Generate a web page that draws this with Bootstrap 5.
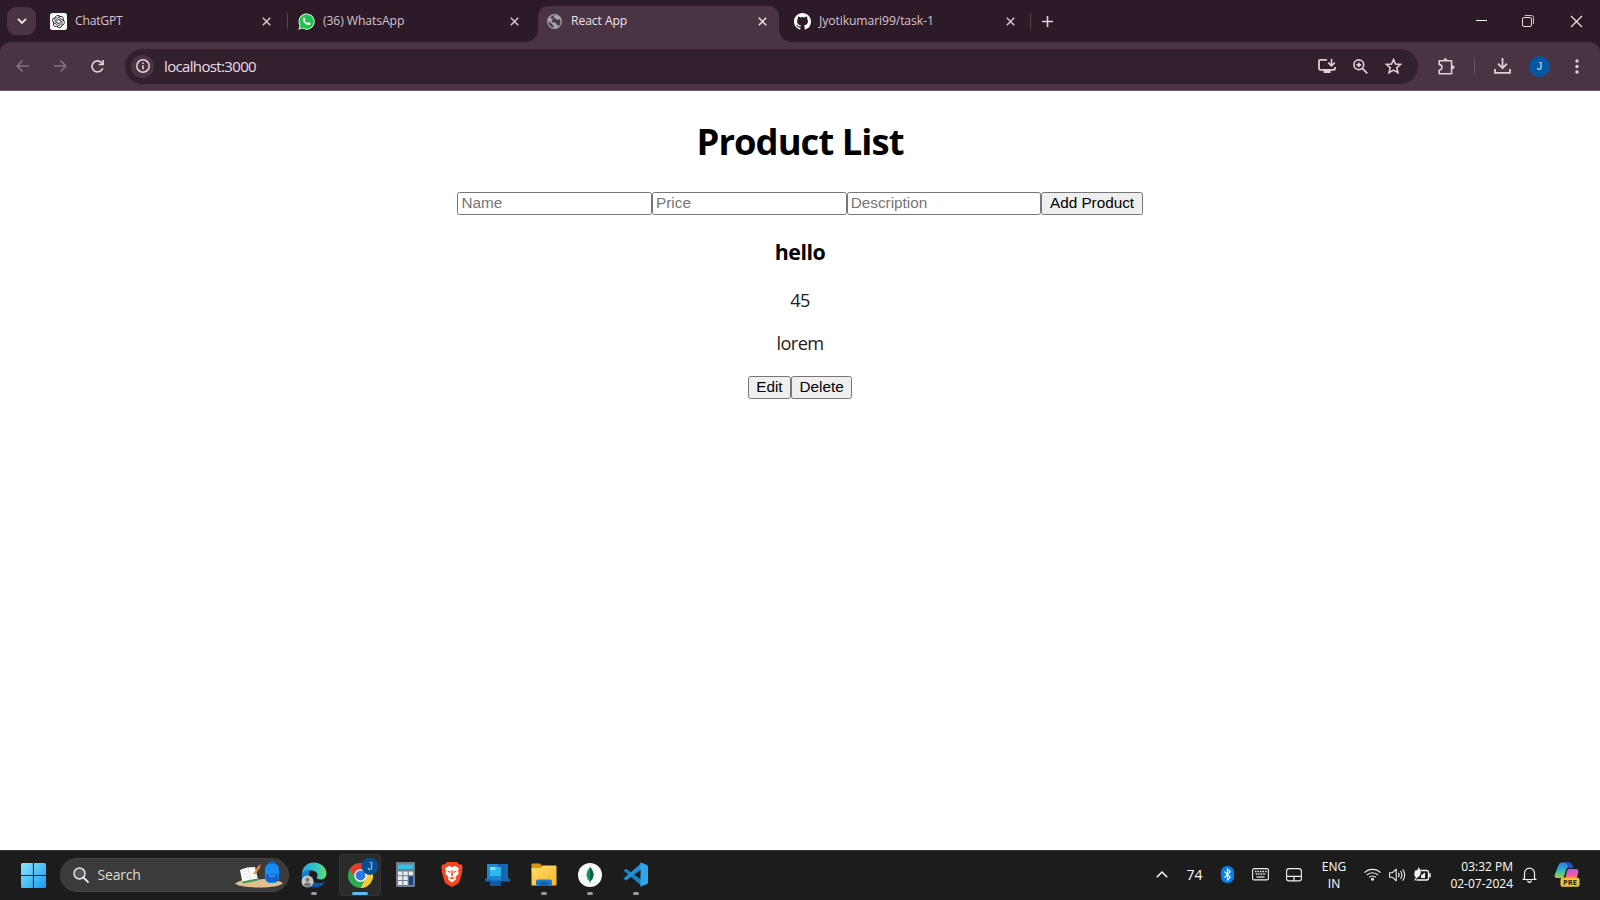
<!DOCTYPE html>
<html lang="en">
<head>
<meta charset="utf-8">
<meta name="viewport" content="width=device-width, initial-scale=1">
<title>React App</title>
<link href="https://cdn.jsdelivr.net/npm/bootstrap@5.3.0/dist/css/bootstrap.min.css" rel="stylesheet">
<style>
  body { font-family: "Open Sans", "Noto Sans", sans-serif; height: 900px; overflow: hidden; color: #111; }
  svg { display: block; flex: none; overflow: visible; }
  .slot { flex: none; display: flex; justify-content: center; align-items: center; }

  /* tab strip */
  .strip { height: 42px; background: #2c1a28; }
  .strip-pad { width: 7px; }
  .tab-search { width: 29px; height: 28px; border-radius: 9px; background: #4a3444; margin: -1px 14px 0 0; }
  .tab-item { height: 42px; font-size: 12.2px; letter-spacing: -.1px; color: #d6c3d0; }
  .tab-item .tab-name { margin-left: 8px; line-height: 42px; }
  .tab-1 { width: 237px; padding-right: 16px; }
  .tab-1 .tab-name { letter-spacing: -.25px; }
  .tab-2 { width: 240px; margin-left: 10px; padding-right: 19px; }
  .tab-3 { width: 241px; height: 36px; padding: 0 12px 6px 9px; background: #4a3444; border-radius: 10px 10px 0 0; color: #efe0eb; position: relative; margin-top: 6px; }
  .tab-3::before, .tab-3::after { content: ""; position: absolute; bottom: 0; width: 12px; height: 12px; }
  .tab-3::before { left: -12px; background: radial-gradient(circle at 0 0, transparent 11.5px, #4a3444 12px); }
  .tab-3::after { right: -12px; background: radial-gradient(circle at 100% 0, transparent 11.5px, #4a3444 12px); }
  .tab-3 .tab-name { line-height: 30px; margin-left: 9px; }
  .tab-4 { width: 236px; margin-left: 15px; padding-right: 15px; }
  .split { width: 1px; height: 16px; background: #57424f; }
  .new-tab { width: 33px; }
  .win-btn { width: 47px; }
  .win-min { padding-right: 2px; }
  .win-max { padding-right: 3px; }

  /* toolbar */
  .toolbar-back { background: #2c1a28; }
  .toolbar { height: 49px; background: #4a3444; border-radius: 10px 10px 0 0; border-bottom: 1px solid #6b5a66; }
  .nav-back { width: 45px; }
  .nav-fwd { width: 30px; }
  .nav-load { width: 50px; padding-right: 5px; }
  .omnibox { flex: none; width: 1293px; height: 35px; border-radius: 18px; background: #33202e; font-size: 15px; letter-spacing: -.65px; color: #eadde6; padding: 0 16px 0 6px; }
  .omni-icons { gap: 17px; }
  .site-info { width: 23px; height: 23px; border-radius: 50%; background: #4a3444; margin-right: 10px; }
  .ext { width: 56px; }
  .bar-split { background: #6b5665; }
  .down { width: 54px; }
  .avatar { width: 21px; height: 21px; border-radius: 50%; background: #0657a1; color: #d8e8f8; font: 11px "Liberation Sans", sans-serif; }
  .dots { width: 50px; padding-left: 3px; }

  /* page */
  .page { height: 759px; background: #fff; }
  .page h1 { font-size: 36.4px; letter-spacing: -.95px; font-weight: 700; line-height: 49px; margin: 26px 0 25.7px; color: #000; }
  .page h3 { font-size: 21.4px; letter-spacing: -.5px; font-weight: 700; line-height: 29px; margin: 22px 0 21.5px; color: #000; }
  .page p { font-size: 18.2px; letter-spacing: -.6px; line-height: 24px; margin: 0 0 19.5px; color: #212121; }
  .field, .push { font-family: "Liberation Sans", sans-serif; font-size: 15.3px; height: 23.5px; border: 1px solid #767676; border-radius: 2.5px; line-height: 20px; }
  .field { width: 194.7px; padding: 1px 3px; background: #fff; }
  .field::placeholder { color: #757575; opacity: 1; }
  .push { background: #efefef; color: #000; padding: 0 7.5px; }
  .actions { margin-top: 1px; }

  /* taskbar */
  .taskbar { height: 50px; background: #1c1c1c; border-top: 1px solid #343634; color: #fff; padding-bottom: 1.5px; }
  .start { width: 60px; padding: 1px 0 0 7.5px; }
  .search-pill { width: 229px; height: 34px; border-radius: 17px; background: #3b3b3b; border: 1px solid #454545; padding: 0 5px 0 11.5px; font-size: 14px; letter-spacing: -.2px; color: #dcdcdc; }
  .search-label { margin-left: 9px; }
  .apps { margin-left: 2px; }
  .app { width: 45.95px; height: 49px; }
  .app-tile { width: 42px; height: 42px; border-radius: 4px; position: relative; }
  .app-on { background: #2b2b2b; border: 1px solid #333; }
  .run-mark { position: absolute; bottom: 1px; left: 50%; width: 6px; height: 3px; margin-left: -3px; border-radius: 2px; background: #9a9a9a; }
  .app-on .run-mark { width: 16px; margin-left: -8px; bottom: 0; background: #5cb8f0; }
  .tray-text { font-size: 12px; line-height: 17px; }
  .t-arrow, .t-bt { width: 32px; }
  .t-temp { width: 34px; font-size: 14px; letter-spacing: -.1px; }
  .t-key { width: 34px; }
  .t-pad, .t-bell { width: 33px; }
  .t-lang { width: 47px; }
  .t-wifi, .t-batt { width: 30px; }
  .t-vol { width: 20px; }
  .t-clock { width: 75.5px; }
  .t-pilot { width: 54px; padding-right: 13px; }
</style>
</head>
<body class="d-flex flex-column bg-white">
<svg width="0" height="0" class="position-absolute">
  <defs>
    <linearGradient id="gWin" x1="0" y1="0" x2="1" y2="1"><stop stop-color="#8be4fd"/><stop offset="1" stop-color="#149df0"/></linearGradient>
    <linearGradient id="gEdge" x1="0" y1="0" x2="1" y2="0"><stop stop-color="#2aa6e6"/><stop offset=".6" stop-color="#35c6c4"/><stop offset="1" stop-color="#6bdb56"/></linearGradient>
    <linearGradient id="gEdgeB" x1="0" y1="0" x2="0" y2="1"><stop stop-color="#1b8ddb"/><stop offset="1" stop-color="#0d4f9c"/></linearGradient>
    <linearGradient id="gFold" x1="0" y1="0" x2="1" y2="1"><stop stop-color="#ffdc6b"/><stop offset="1" stop-color="#f5b92c"/></linearGradient>
    <linearGradient id="gCopA" x1="0" y1="0" x2="0" y2="1"><stop stop-color="#2f7be8"/><stop offset=".5" stop-color="#2bb6c4"/><stop offset="1" stop-color="#a6d13a"/></linearGradient>
    <linearGradient id="gCopB" x1="0" y1="0" x2="0" y2="1"><stop stop-color="#b05be8"/><stop offset=".6" stop-color="#ee5c9b"/><stop offset="1" stop-color="#f98a4b"/></linearGradient>
    <symbol id="cross" viewBox="0 0 9 9"><path d="M.8.8 8.2 8.2M8.2.8.8 8.2" stroke="currentColor" stroke-width="1.5" fill="none"/></symbol>
  </defs>
</svg>

<header class="strip d-flex align-items-center">
  <div class="strip-pad"></div>
  <div class="tab-search d-flex align-items-center justify-content-center">
    <svg width="10" height="6" viewBox="0 0 10 6"><path d="M1 .8 5 4.8 9 .8" fill="none" stroke="#f0e2ec" stroke-width="1.9"/></svg>
  </div>
  <div class="tab-item tab-1 d-flex align-items-center">
    <svg width="17" height="17" viewBox="0 0 17 17"><rect width="17" height="17" rx="2.5" fill="#fff"/>
      <path transform="translate(2.1 2.1) scale(.533)" fill="#222" d="M22.2819 9.8211a5.9847 5.9847 0 0 0-.5157-4.9108 6.0462 6.0462 0 0 0-6.5098-2.9A6.0651 6.0651 0 0 0 4.9807 4.1818a5.9847 5.9847 0 0 0-3.9977 2.9 6.0462 6.0462 0 0 0 .7427 7.0966 5.98 5.98 0 0 0 .511 4.9107 6.051 6.051 0 0 0 6.5146 2.9001A5.9847 5.9847 0 0 0 13.2599 24a6.0557 6.0557 0 0 0 5.7718-4.2058 5.9894 5.9894 0 0 0 3.9977-2.9001 6.0557 6.0557 0 0 0-.7475-7.0729zm-9.022 12.6081a4.4755 4.4755 0 0 1-2.8764-1.0408l.1419-.0804 4.7783-2.7582a.7948.7948 0 0 0 .3927-.6813v-6.7369l2.02 1.1686a.071.071 0 0 1 .038.052v5.5826a4.504 4.504 0 0 1-4.4945 4.4944zm-9.6607-4.1254a4.4708 4.4708 0 0 1-.5346-3.0137l.142.0852 4.783 2.7582a.7712.7712 0 0 0 .7806 0l5.8428-3.3685v2.3324a.0804.0804 0 0 1-.0332.0615L9.74 19.9502a4.4992 4.4992 0 0 1-6.1408-1.6464zM2.3408 7.8956a4.485 4.485 0 0 1 2.3655-1.9728V11.6a.7664.7664 0 0 0 .3879.6765l5.8144 3.3543-2.0201 1.1685a.0757.0757 0 0 1-.071 0l-4.8303-2.7865A4.504 4.504 0 0 1 2.3408 7.872zm16.5963 3.8558L13.1038 8.364 15.1192 7.2a.0757.0757 0 0 1 .071 0l4.8303 2.7913a4.4944 4.4944 0 0 1-.6765 8.1042v-5.6772a.79.79 0 0 0-.407-.667zm2.0107-3.0231l-.142-.0852-4.7735-2.7818a.7759.7759 0 0 0-.7854 0L9.409 9.2297V6.8974a.0662.0662 0 0 1 .0284-.0615l4.8303-2.7866a4.4992 4.4992 0 0 1 6.6802 4.66zM8.3065 12.863l-2.02-1.1638a.0804.0804 0 0 1-.038-.0567V6.0742a4.4992 4.4992 0 0 1 7.3757-3.4537l-.142.0805L8.704 5.459a.7948.7948 0 0 0-.3927.6813zm1.0976-2.3654l2.602-1.4998 2.6069 1.4998v2.9994l-2.5974 1.4997-2.6067-1.4997Z"/></svg>
    <span class="tab-name me-auto">ChatGPT</span>
    <svg width="9" height="9"><use href="#cross"/></svg>
  </div>
  <div class="split"></div>
  <div class="tab-item tab-2 d-flex align-items-center">
    <svg width="17" height="17" viewBox="0 0 17 17"><path d="M.4 16.7 1.5 12.4A8.1 8.1 0 1 1 4.6 15.6Z" fill="#e9fbe9"/><path d="M1.6 15.5 2.5 12.3A7.2 7.2 0 1 1 4.9 14.7Z" fill="#1fc24c"/><path d="M5.2 4.9c.5-.7 1.2-.6 1.4-.1l.7 1.5c.1.4-.6 1-.6 1.3.5 1 1.5 1.9 2.6 2.4.4 0 .9-1 1.3-.9l1.6.8c.4.4 0 1.4-.6 1.8-1.200.8-3.300-.1-4.700-1.400C5.500 9 4.400 6.500 5.200 4.900Z" fill="#fff"/></svg>
    <span class="tab-name me-auto">(36) WhatsApp</span>
    <svg width="9" height="9"><use href="#cross"/></svg>
  </div>
  <div class="tab-item tab-3 d-flex align-items-center align-self-start">
    <svg width="15" height="15" viewBox="0 0 15 15"><circle cx="7.5" cy="7.5" r="7.4" fill="#a0a4aa"/><path d="M8.900 1.300Q6.600 2 6.700 3.600 8.600 4 9.400 5.400 10.800 6 12 5.200L13.500 6.500Q13.900 9.800 11.500 12.200 11 10.600 9.600 10.500 9.300 8.700 7.800 8.300H4.900Q3.900 7.600 5 6.900 4.300 5.900 5.900 5.700 6 4.600 4.800 4.600L3 3.700Q5.500 1 8.900 1.300Z" fill="#4a3444"/><path d="M1.300 7 4.200 9.500Q5.500 9.700 5.600 11.200 7 11.500 6.800 13.600 2 13 1.300 7Z" fill="#4a3444"/><path d="M6.800 1.500Q9 3 10.500 2L12 4.500 9.500 5Q8 3.500 6.800 4Z" fill="#a0a4aa"/></svg>
    <span class="tab-name me-auto">React App</span>
    <svg width="9" height="9"><use href="#cross"/></svg>
  </div>
  <div class="tab-item tab-4 d-flex align-items-center">
    <svg width="17" height="17" viewBox="0 0 16 16"><path fill="#fff" d="M8 0C3.580 0 0 3.580 0 8c0 3.540 2.290 6.530 5.470 7.590.4.070.55-.17.55-.38 0-.19-.01-.82-.01-1.490-2.010.37-2.530-.49-2.690-.94-.09-.23-.48-.94-.82-1.130-.28-.15-.68-.52-.01-.53.63-.01 1.080.58 1.230.82.72 1.210 1.870.87 2.330.66.07-.52.28-.87.51-1.070-1.780-.2-3.640-.89-3.640-3.950 0-.87.31-1.590.82-2.150-.08-.2-.36-1.020.08-2.120 0 0 .67-.21 2.200.82a7.600 7.600 0 0 1 4 0c1.530-1.040 2.200-.82 2.200-.82.44 1.100.16 1.920.08 2.120.51.56.82 1.270.82 2.150 0 3.070-1.870 3.750-3.650 3.950.29.25.54.73.54 1.480 0 1.070-.01 1.930-.01 2.200 0 .21.15.46.55.38A8.010 8.010 0 0 0 16 8c0-4.420-3.580-8-8-8"/></svg>
    <span class="tab-name me-auto">Jyotikumari99/task-1</span>
    <svg width="9" height="9"><use href="#cross"/></svg>
  </div>
  <div class="split"></div>
  <div class="slot new-tab"><svg width="11" height="11" viewBox="0 0 11 11"><path d="M5.5 0V11M0 5.5H11" stroke="#e0cedb" stroke-width="1.6"/></svg></div>
  <div class="d-flex ms-auto">
    <div class="slot win-btn win-min"><svg width="11" height="12"><path d="M0 5.500H11" stroke="#fff"/></svg></div>
    <div class="slot win-btn win-max"><svg width="12" height="12" viewBox="0 0 12 12"><rect x=".5" y="2.500" width="9" height="9" rx="1.500" fill="none" stroke="#e8dde5"/><path d="M2.800.5H9.500A2 2 0 0 1 11.500 2.500V9" fill="none" stroke="#cdbfc9"/></svg></div>
    <div class="slot win-btn"><svg width="11" height="11" viewBox="0 0 11 11"><path d="M0 0 11 11M11 0 0 11" stroke="#f4ecf2" stroke-width="1.100"/></svg></div>
  </div>
</header>

<div class="toolbar-back">
<nav class="toolbar d-flex align-items-center">
  <div class="slot nav-back"><svg width="13" height="12" viewBox="0 0 13 12"><path d="M13 6H1.200M6.500.6 1.100 6 6.500 11.400" fill="none" stroke="#85727f" stroke-width="1.500"/></svg></div>
  <div class="slot nav-fwd"><svg width="13" height="12" viewBox="0 0 13 12"><path d="M0 6H11.800M6.500.6 11.900 6 6.500 11.400" fill="none" stroke="#85727f" stroke-width="1.500"/></svg></div>
  <div class="slot nav-load"><svg width="13" height="13" viewBox="0 0 13 13"><path d="M11.700 8.200A5.500 5.500 0 1 1 10.600 2.800L12 4.400" fill="none" stroke="#e0cedb" stroke-width="1.700"/><path d="M12.900 0V5.300H7.600V3.700H11.300V0Z" fill="#e0cedb"/></svg></div>
  <div class="omnibox d-flex align-items-center">
    <div class="site-info d-flex align-items-center justify-content-center"><svg width="14" height="14" viewBox="0 0 14 14"><circle cx="7" cy="7" r="6.200" fill="none" stroke="#e6d6e1" stroke-width="1.500"/><path d="M7 6.200V10.200M7 3.600V5" stroke="#e6d6e1" stroke-width="1.500"/></svg></div>
    <span class="me-auto url-text">localhost:3000</span>
    <div class="omni-icons d-flex align-items-center">
      <svg width="18" height="16" viewBox="0 0 18 16"><path d="M9 1.800H2.300Q1 1.800 1 3.100V10.500Q1 11.800 2.300 11.800H15.700Q17 11.800 17 10.500V9" fill="none" stroke="#e0cedb" stroke-width="1.800"/><path d="M5.500 12H12.500V15H5.500Z" fill="#e0cedb"/><path d="M13.500.8V7.600M10.200 4.600 13.500 7.800 16.800 4.600" fill="none" stroke="#e0cedb" stroke-width="1.600"/></svg>
      <svg width="15" height="15" viewBox="0 0 15 15"><circle cx="5.800" cy="5.800" r="4.900" fill="none" stroke="#e0cedb" stroke-width="1.600"/><path d="M9.300 9.300 14.300 14.300M5.800 3.400V8.200M3.400 5.800H8.200" stroke="#e0cedb" stroke-width="1.700"/></svg>
      <svg width="17" height="16" viewBox="0 0 17 16"><path d="M8.500 1.600 10.500 6.100 15.500 6.500 11.700 9.800 12.900 14.600 8.500 12.100 4.100 14.600 5.300 9.800 1.500 6.500 6.500 6.100Z" fill="none" stroke="#e0cedb" stroke-width="1.600"/></svg>
    </div>
  </div>
  <div class="slot ext"><svg width="17" height="17" viewBox="0 0 17 17"><path d="M1.200 2.800H13.600V15.800H1.200V12.300Q4 11.600 4 9.300 4 7 1.200 6.400Z" fill="none" stroke="#e0cedb" stroke-width="1.600" stroke-linejoin="round"/><path d="M5.300 2.500Q5.600.2 7.400.2 9.200.2 9.500 2.500ZM14 7.200Q16.700 7.600 16.700 9.200 16.700 10.800 14 11.200Z" fill="#e0cedb"/></svg></div>
  <div class="split bar-split"></div>
  <div class="slot down"><svg width="17" height="16" viewBox="0 0 17 16"><path d="M8.500 0V10M4 5.700 8.500 10.200 13 5.700M1 11V14.800H16V11" fill="none" stroke="#e0cedb" stroke-width="1.800"/></svg></div>
  <div class="avatar d-flex align-items-center justify-content-center">J</div>
  <div class="slot dots"><svg width="4" height="15" viewBox="0 0 4 15" fill="#e0cedb"><circle cx="2" cy="2" r="1.700"/><circle cx="2" cy="7.500" r="1.700"/><circle cx="2" cy="13" r="1.700"/></svg></div>
</nav>
</div>

<main class="page d-flex flex-column align-items-center">
  <h1>Product List</h1>
  <form class="d-flex">
    <input class="field" placeholder="Name"><input class="field" placeholder="Price"><input class="field" placeholder="Description"><button type="button" class="push">Add Product</button>
  </form>
  <h3>hello</h3>
  <p>45</p>
  <p>lorem</p>
  <div class="actions d-flex"><button type="button" class="push">Edit</button><button type="button" class="push">Delete</button></div>
</main>

<footer class="taskbar d-flex align-items-center">
  <div class="slot start"><svg width="25" height="25" viewBox="0 0 25 25"><g fill="url(#gWin)"><path d="M1.500 0H11.900V11.900H0V1.500Q0 0 1.500 0ZM13 0H23.500Q25 0 25 1.500V11.900H13ZM0 13H11.900V25H1.500Q0 25 0 23.500ZM13 13H25V23.500Q25 25 23.500 25H13Z"/></g></svg></div>
  <div class="search-pill d-flex align-items-center">
    <svg width="16" height="16" viewBox="0 0 16 16"><circle cx="6.500" cy="6.500" r="5.500" fill="#55585c" stroke="#e4e4e4" stroke-width="1.500"/><path d="M10.500 10.500 15 15" stroke="#e4e4e4" stroke-width="2" stroke-linecap="round"/></svg>
    <span class="me-auto search-label">Search</span>
    <svg width="48" height="27" viewBox="0 0 48 27"><path d="M0 22.500Q10 16 24 18.500 38 16 48 22 44 26.500 24 26.500 5 26.500 0 22.500Z" fill="#e3bf8f"/><path d="M5 9 12 6.500 20 6 23 18.500 14 19.500 7.500 21.500Z" fill="#fff"/><path d="M7 20.500 22.500 17.500 23 19.500 8 22.500Z" fill="#3e9a5a"/><path d="M13 7 15.500 19M7.500 11 12 9.500M8 14 13 12.500M9 17 13.500 15.500" stroke="#c3ccd4" stroke-width=".7"/><path d="M18 13 23.500 4.500 25.500 6 20 13.500Z" fill="#f09030"/><path d="M23.500 4.500 24.500 3 26.500 4.500 25.500 6Z" fill="#df4339"/><path d="M34 3.500Q34 1 37 1T40 3.500" fill="none" stroke="#1764c5" stroke-width="1.500"/><rect x="30" y="2.500" width="14" height="19.500" rx="5.500" fill="#168af2"/><path d="M31 13.500H43V18Q43 21 40 21H34Q31 21 31 18Z" fill="#1263d6"/><path d="M34 14.500Q37 17 40 14.500" stroke="#5cb2fa" fill="none"/></svg>
  </div>
  <div class="apps d-flex">
    <div class="app slot"><div class="app-tile slot">
      <svg width="26" height="26" viewBox="0 0 26 26"><path d="M1 12C1 5 6.500.5 13 .5 20 .5 25.500 5.500 25.500 11.500 25.500 15.500 22.500 17.500 19.500 17.500 17 17.500 15.500 16.500 15.800 15.300 17.500 13.500 16.500 8.500 10 8.500 5.500 8.500 2 10.500 1 12Z" fill="url(#gEdge)"/><path d="M.6 13C1 9.800 5 7.500 9.500 7.500 6.500 10.500 8 18 14 20.500 18 22 22 20.800 24.400 19.200 22 23.500 18 25.500 13.500 25.500 6 25.500.3 19.500.6 13Z" fill="url(#gEdgeB)"/><circle cx="6.500" cy="19.500" r="6" fill="#c9c9c9"/><circle cx="6.500" cy="17.800" r="2.100" fill="#777"/><path d="M2.800 23Q3.200 20.400 6.500 20.400T10.200 23Q8.500 25 6.500 25T2.800 23Z" fill="#777"/></svg><i class="run-mark"></i></div></div>
    <div class="app slot"><div class="app-tile app-on slot">
      <svg width="32" height="34" viewBox="0 0 32 34"><g transform="translate(4 5)"><circle cx="12.500" cy="12.500" r="12.500" fill="#2da94f"/><path d="M1.700 6.200A12.500 12.500 0 0 1 23.300 6.200L12.500 8 7.500 15.500Z" fill="#e33b2e"/><path d="M23.300 6.200A12.500 12.500 0 0 1 12.500 25L17.500 15.500 16 6.500Z" fill="#fcc934"/><circle cx="12.500" cy="12.500" r="6.300" fill="#fff"/><circle cx="12.500" cy="12.500" r="4.900" fill="#2a7be8"/></g><circle cx="26" cy="8.500" r="8.500" fill="#064f92"/><text x="26" y="12.300" text-anchor="middle" font-size="10.500" font-family="Liberation Sans" fill="#b9d6ee">J</text></svg><i class="run-mark"></i></div></div>
    <div class="app slot"><svg width="19" height="25" viewBox="0 0 19 25"><rect width="19" height="25" rx="1" fill="#737e89"/><rect x="2" y="2.500" width="15" height="4.500" fill="#35c0e4"/><g fill="#e8ecef"><path d="M2 9.500H6.300V13.300H2ZM7.400 9.500H11.700V13.300H7.400ZM12.800 9.500H17V13.300H12.800ZM2 14.300H6.300V18.100H2ZM7.400 14.300H11.700V18.100H7.400ZM2 19.100H6.300V22.900H2ZM7.400 19.100H11.700V22.900H7.400Z"/></g><path d="M12.800 14.300H17V22.900H12.800Z" fill="#15418a"/></svg></div>
    <div class="app slot"><svg width="22" height="25" viewBox="0 0 22 25"><path d="M6 0H16L18.300 2.500 20.500 2.200 21.800 5.200 21 7.800 21.500 9 18.500 19.500Q18 21 16.500 22L11 25 5.500 22Q4 21 3.500 19.500L.5 9 1 7.800.2 5.200 1.500 2.200 3.700 2.500Z" fill="#f4481e"/><path d="M4 6.500 7.500 4 11 5 14.500 4 18 6.500 17 8.500 17.800 11.500 14.500 15 15 17.500 11 20.500 7 17.500 7.500 15 4.200 11.500 5 8.500Z" fill="#fff"/><path d="M5.500 8.500 9.500 9.500 8.800 11ZM16.500 8.500 12.500 9.500 13.200 11ZM10.500 8H11.500L12 13 11 14.500 10 13ZM8 16 11 15 14 16 11 17.300Z" fill="#f4481e"/></svg></div>
    <div class="app slot"><svg width="25" height="22" viewBox="0 0 25 22"><path d="M2 0H23V14.500H25V17.500H0V14.500H2Z" fill="#1767b4"/><path d="M2 0H13V15H2Z" fill="#2684cc"/><path d="M5 3H16V22H5Z" fill="#1a86d0"/><path d="M5 3H16V12H5Z" fill="#2eb8ee"/><path d="M5 3H10.500V6H5Z" fill="#79e3fb"/><path d="M5 16.500H16V22H5Z" fill="#1259a5"/></svg></div>
    <div class="app slot"><div class="app-tile slot"><svg width="26" height="23" viewBox="0 0 26 23"><path d="M.5 1.500Q.5.5 1.500.5H9L11.500 3.500V8H.5Z" fill="#d9951a"/><path d="M.5 5H9.500L11.500 2.500H24.500Q25.500 2.500 25.500 3.500V22.500H.5Z" fill="url(#gFold)"/><path d="M5 22.500V18.500Q5 16.500 7 16.500H19Q21 16.500 21 18.500V22.500Z" fill="#1b7bd0"/><path d="M8.500 19.300H17.500V22.500H8.500Z" fill="#0f5ca8"/></svg><i class="run-mark"></i></div></div>
    <div class="app slot"><div class="app-tile slot"><svg width="24" height="24" viewBox="0 0 24 24"><circle cx="12" cy="12" r="12" fill="#f8f8f8"/><path d="M12 4Q16 8.500 15.500 12.500 15 16.500 12.300 18.500V20.500H11.700V18.500Q9 16.500 8.500 12.500 8.300 8.500 12 4Z" fill="#14945a"/><path d="M12 4Q16 8.500 15.500 12.500 15 16.500 12 18.500Z" fill="#0c5f42"/></svg><i class="run-mark"></i></div></div>
    <div class="app slot"><div class="app-tile slot"><svg width="25" height="25" viewBox="0 0 25 25"><path d="M.5 8.500 3 6.800 18 17.500V23.500Z" fill="#1b7fc4"/><path d="M.5 16.500 3 18.400 18 7.500V1.500Z" fill="#2390d6"/><path d="M17.500.3 24 3Q25 3.500 25 4.500V20.500Q25 21.500 24 22L17.500 24.700Z" fill="#2fa5ee"/></svg><i class="run-mark"></i></div></div>
  </div>
  <div class="d-flex align-items-center ms-auto">
    <div class="slot t-arrow"><svg width="12" height="7" viewBox="0 0 12 7"><path d="M.8 6.200 6 1 11.200 6.200" fill="none" stroke="#fff" stroke-width="1.500"/></svg></div>
    <div class="slot t-temp">74</div>
    <div class="slot t-bt"><svg width="13" height="17" viewBox="0 0 13 17"><rect width="13" height="17" rx="6" fill="#0c7fe6"/><path d="M3.500 5.500 9.300 11.300 6.500 14V3L9.300 5.700 3.500 11.500" fill="none" stroke="#fff" stroke-width="1.100"/></svg></div>
    <div class="slot t-key"><svg width="17" height="13" viewBox="0 0 17 13"><rect x=".6" y=".6" width="15.800" height="11.300" rx="1.500" fill="none" stroke="#f0f0f0" stroke-width="1.100"/><path d="M3 3.500H14.500M3.800 6H14" stroke="#f0f0f0" stroke-width="1.400" stroke-dasharray="1.500 1"/><path d="M4.500 9H12.500" stroke="#f0f0f0" stroke-width="1.200"/></svg></div>
    <div class="slot t-pad"><svg width="16" height="14" viewBox="0 0 16 14"><rect x=".6" y=".6" width="14.800" height="12.300" rx="2.500" fill="none" stroke="#f0f0f0" stroke-width="1.100"/><path d="M.6 8.300H15.400M8 8.300V13" stroke="#f0f0f0" stroke-width="1.200"/></svg></div>
    <div class="slot tray-text text-center t-lang"><div>ENG<br>IN</div></div>
    <div class="slot t-wifi"><svg width="17" height="13" viewBox="0 0 17 13"><g fill="none" stroke="#f0f0f0" stroke-width="1.200"><path d="M.5 4.700A11.300 11.300 0 0 1 16.500 4.700M2.900 7.100A7.900 7.900 0 0 1 14.100 7.100M5.200 9.400A4.700 4.700 0 0 1 11.800 9.400"/></g><circle cx="8.500" cy="11.300" r="1.500" fill="#f0f0f0"/></svg></div>
    <div class="slot t-vol"><svg width="17" height="14" viewBox="0 0 17 14"><g fill="none" stroke="#f0f0f0" stroke-width="1.100"><path d="M.6 4.800H3.200L7.200 1.200V12.800L3.200 9.200H.6Z" stroke-linejoin="round"/><path d="M9.300 4.800Q11 7 9.300 9.200M11.500 3Q14.300 7 11.500 11M13.600 1.200Q17.800 7 13.600 12.800"/></g></svg></div>
    <div class="slot t-batt"><svg width="17" height="14" viewBox="0 0 17 14"><path d="M6.500 2.500H12.500Q14.500 2.500 14.500 4.500V10Q14.500 12 12.500 12H2.500" fill="none" stroke="#f0f0f0" stroke-width="1.300"/><path d="M7 10V7.500L11 4.500V10ZM15.200 5.200H16.800V9.200H15.200Z" fill="#f0f0f0"/><path d="M1 2.500Q4 3 4.500-1 7.500 2.500 6.500 6 5 9.500 2.500 9.500-1 8.500 1 2.500Z" fill="#f0f0f0"/><path d="M.5 12.500 3.500 8" stroke="#f0f0f0" stroke-width="1.100"/></svg></div>
    <div class="tray-text text-end t-clock">03:32 PM<br>02-07-2024</div>
    <div class="slot t-bell"><svg width="15" height="16" viewBox="0 0 15 16"><path d="M2.500 11.500V6.200A5 5 0 0 1 12.500 6.200V11.500L14 12.500H1Z" fill="none" stroke="#f0f0f0" stroke-width="1.200" stroke-linejoin="round"/><path d="M5.500 13.500Q6 15.300 7.500 15.300T9.500 13.500" fill="none" stroke="#f0f0f0" stroke-width="1.200"/></svg></div>
    <div class="slot t-pilot"><svg width="26" height="25" viewBox="0 0 26 25"><path d="M5 2Q6 .5 8 .5H15Q17.500.5 18.300 3L19 5H15Q13 5 12.300 7L9.500 16H3Q0 16 .8 12.500Z" fill="url(#gCopA)"/><path d="M14 .5H15Q17.500.5 18.300 3L19 6H15L12 1Z" fill="#2450c8"/><path d="M15 7H21.500Q25 7 24.300 10.500L22.500 17H11L13 9Q13.500 7 15 7Z" fill="url(#gCopB)"/><rect x="6.500" y="15.800" width="19" height="9" rx="2" fill="#f5c32c"/><text x="16" y="23" text-anchor="middle" font-family="Open Sans" font-weight="700" font-size="7.500" fill="#222">PRE</text></svg></div>
  </div>
</footer>
<script src="https://cdn.jsdelivr.net/npm/bootstrap@5.3.0/dist/js/bootstrap.bundle.min.js"></script>
</body>
</html>
